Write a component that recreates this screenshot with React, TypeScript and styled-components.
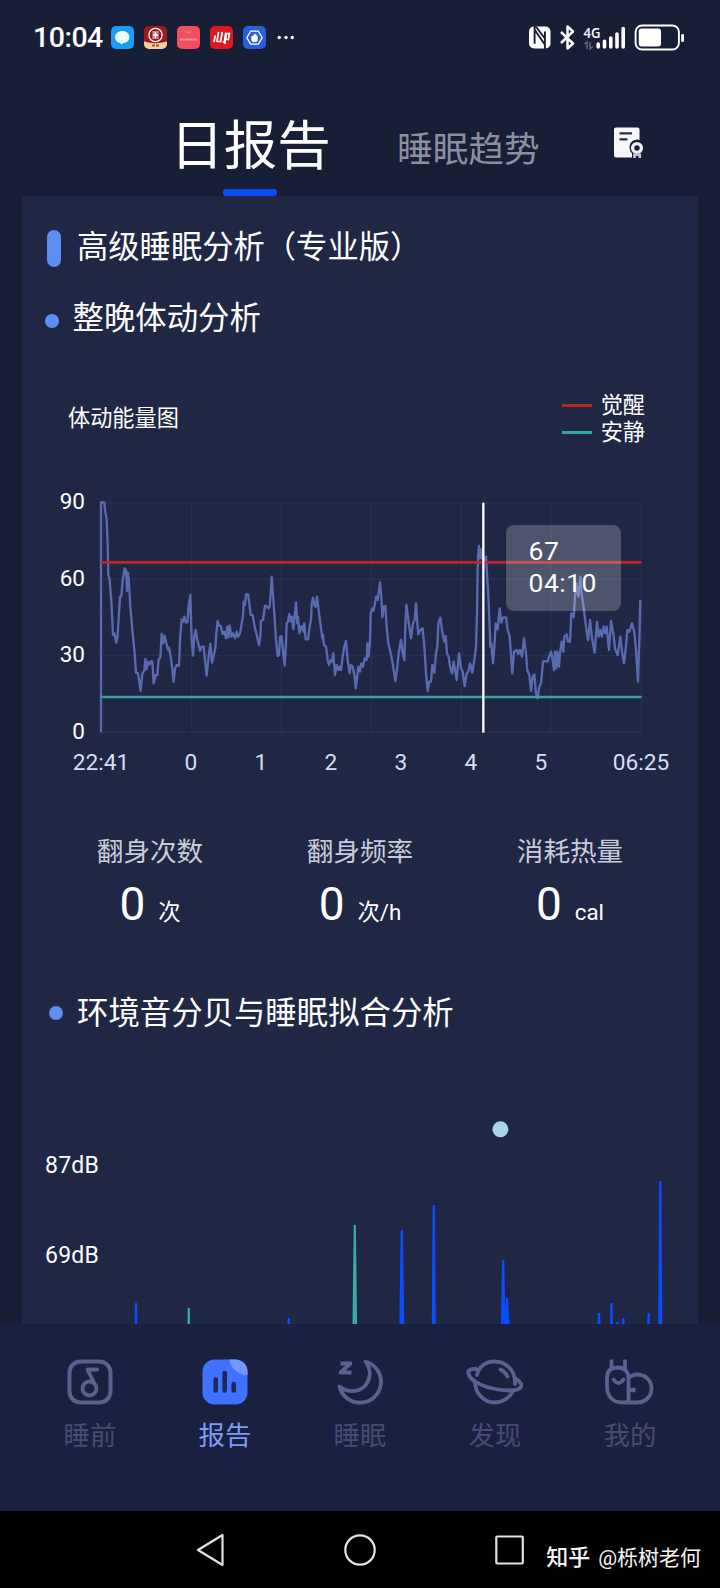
import React from 'react';
import styled, { createGlobalStyle } from 'styled-components';

const GlobalStyle = createGlobalStyle`
  * { box-sizing: border-box; }
  body { margin: 0; background: #181e36; }
  svg { display: block; flex: none; }
`;

const Screen = styled.div`
  width: 720px;
  height: 1588px;
  display: flex;
  flex-direction: column;
  overflow: hidden;
  background: #181e36;
  color: #fff;
  font-family: Roboto, 'Noto Sans CJK SC', sans-serif;
`;

const StatusBar = styled.header`
  height: 75px;
  flex: none;
  display: flex;
  align-items: center;
  justify-content: space-between;
  padding: 0 36px 0 33px;
`;

const StatusGroup = styled.div<{ $gap: number }>`
  display: flex;
  align-items: center;
  gap: ${(p) => p.$gap}px;
`;

const Clock = styled.span`
  width: 68px;
  font-size: 28.5px;
  line-height: 30px;
  font-weight: 500;
  letter-spacing: -0.5px;
  white-space: nowrap;
`;

const Tabs = styled.nav`
  height: 121px;
  flex: none;
  display: flex;
  align-items: flex-start;
  padding-left: 170px;
`;

const ActiveTab = styled.div`
  width: 161px;
  height: 121px;
  display: flex;
  flex-direction: column;
  align-items: center;
  justify-content: space-between;
  font-size: 53.5px;
  line-height: 60px;
  padding-top: 42px;
  white-space: nowrap;

  &::after {
    content: '';
    width: 54px;
    height: 7px;
    margin-right: 2px;
    border-radius: 3px;
    background: #0a4cf2;
  }
`;

const InactiveTab = styled.div`
  margin: 55px 0 0 66px;
  width: 144px;
  font-size: 35.7px;
  line-height: 40px;
  color: #8c8f9f;
  white-space: nowrap;
`;

const ReportButton = styled.button`
  margin: 52px 0 0 73px;
  padding: 0;
  border: 0;
  background: none;
`;

const Panel = styled.main`
  height: 1128px;
  flex: none;
  margin: 0 22px;
  background: #1f2745;
  overflow: hidden;
`;

const SectionTitle = styled.h1`
  margin: 30px 0 0 25px;
  height: 44px;
  display: flex;
  align-items: center;
  gap: 16px;
  font-size: 31.3px;
  line-height: 40px;
  font-weight: 400;

  &::before {
    content: '';
    width: 14px;
    height: 37px;
    border-radius: 7px;
    background: #5f8ef2;
  }
`;

const SubTitle = styled.h2<{ $top: number; $left: number; $drop: number }>`
  margin: ${(p) => p.$top}px 0 0 ${(p) => p.$left}px;
  height: 44px;
  display: flex;
  align-items: center;
  gap: 14px;
  font-size: 31.4px;
  line-height: 40px;
  font-weight: 400;

  &::before {
    content: '';
    width: 14px;
    height: 14px;
    margin-top: ${(p) => p.$drop}px;
    border-radius: 50%;
    background: #5f8ef2;
  }
`;

const ChartHeader = styled.div`
  margin: 47px 53px 0 46px;
  height: 60px;
  display: flex;
  align-items: center;
  justify-content: space-between;
  font-size: 22.2px;
  line-height: 27px;
`;

const Legend = styled.div`
  display: flex;
  flex-direction: column;
  padding-top: 2px;
`;

const LegendItem = styled.div<{ $color: string }>`
  display: flex;
  align-items: center;
  gap: 9px;

  &::before {
    content: '';
    width: 30px;
    height: 3px;
    background: ${(p) => p.$color};
  }
`;

const ChartBody = styled.div`
  position: relative;
  margin-top: 50px;
  height: 238px;
  display: flex;
`;

const YAxis = styled.div`
  width: 75px;
  height: 254px;
  margin-top: -9px;
  padding-right: 12px;
  display: flex;
  flex-direction: column;
  justify-content: space-between;
  align-items: flex-end;
  font-size: 22.5px;
  line-height: 24px;
`;

const Tooltip = styled.div`
  position: absolute;
  left: 483.5px;
  top: 27px;
  width: 115px;
  height: 86px;
  padding: 10px 0 0 23px;
  border-radius: 8px;
  background: rgba(255, 255, 255, 0.21);
  font-size: 26.5px;
  line-height: 32px;
  letter-spacing: 0.5px;
`;

const XAxis = styled.div`
  margin: 14px 0 0 24px;
  width: 660px;
  display: grid;
  grid-template-columns: 110px repeat(6, 70px) 130px;
  justify-items: center;
  font-size: 22.7px;
  line-height: 26px;
  color: #d5ddf5;
`;

const Stats = styled.div`
  margin: 59px 23px 0;
  display: grid;
  grid-template-columns: repeat(3, 210px);
  justify-items: center;
`;

const Stat = styled.div`
  display: flex;
  flex-direction: column;
  align-items: center;
`;

const StatLabel = styled.span`
  font-size: 26.6px;
  line-height: 34px;
  color: #c8cbd9;
`;

const StatValue = styled.div`
  margin-top: 7px;
  height: 56px;
  display: flex;
  align-items: baseline;
  gap: 13px;
  font-size: 46px;
  line-height: 56px;
`;

const Unit = styled.span`
  font-size: 22.3px;
  line-height: 24px;
`;

const NoiseChart = styled.div`
  margin-top: 74px;
  height: 214px;
  display: flex;
`;

const NoiseAxis = styled.div`
  width: 98px;
  padding: 41px 0 0 23px;
  display: flex;
  flex-direction: column;
  gap: 60px;
  font-size: 23px;
  line-height: 30px;
  letter-spacing: 0.2px;
`;

const BottomBar = styled.nav`
  height: 187px;
  flex: none;
  padding: 35px 22.5px 0;
  display: grid;
  grid-template-columns: repeat(5, 135px);
  justify-items: center;
  align-items: start;
  background: #1a2040;
`;

const BottomItem = styled.div<{ $active?: boolean }>`
  display: flex;
  flex-direction: column;
  align-items: center;
  gap: 14px;
  font-size: 26.4px;
  line-height: 34px;
  color: ${(p) => (p.$active ? '#7c9cf8' : '#454b73')};
`;

const SystemNav = styled.footer`
  position: relative;
  height: 77px;
  flex: none;
  display: flex;
  align-items: center;
  gap: 118px;
  padding-left: 194px;
  background: #000;
`;

const Watermark = styled.div`
  position: absolute;
  right: 19px;
  top: 32px;
  display: flex;
  gap: 8px;
  font-size: 21px;
  line-height: 30px;
  color: #f4f4f4;
  white-space: nowrap;
`;

const Brand = styled.b`
  font-size: 22px;
  font-weight: 500;
`;

const AppIcons = () => (
  <>
    <svg width="23" height="23" viewBox="0 0 23 23">
      <rect width="23" height="23" rx="5" fill="#199df5" />
      <path d="M11.4 5c4.1 0 7 2.6 7 6.1 0 3.6-3 6.1-6.7 6.1l-.9 1.5-1.8-1.8C6 16.200 4 14 4 11.200 4 7.700 7.200 5 11.400 5Z" fill="#e9fbff" />
    </svg>
    <svg width="23" height="23" viewBox="0 0 23 23">
      <rect width="23" height="23" rx="5" fill="#9d1820" />
      <path d="M0 15.500Q11.500 19 23 15.500V18a5 5 0 0 1-5 5H5a5 5 0 0 1-5-5Z" fill="#f4cfa0" />
      <circle cx="11.500" cy="9" r="6.600" fill="none" stroke="#fff" strokeWidth="1.300" />
      <path d="M8.300 6h6.400M8.300 12h6.400M11.500 6v6M8.500 8.200h2v1.700h-2M14.500 8.200h-2v1.700h2" fill="none" stroke="#fff" strokeWidth="1.200" />
      <path d="M8 19.500h3M12 19.500h3" stroke="#b3503b" strokeWidth="2" />
    </svg>
    <svg width="23" height="23" viewBox="0 0 23 23">
      <rect width="23" height="23" rx="5" fill="#f24e5f" />
      <path d="M8.500 5q3 3.500 6 0" fill="none" stroke="#f98c8f" />
      <path d="M3 13.500h17" stroke="#f9a3a2" strokeWidth="2" strokeDasharray="2 .6" />
    </svg>
    <svg width="23" height="23" viewBox="0 0 23 23">
      <rect width="23" height="23" rx="5" fill="#e2171f" />
      <path d="M5.300 9.500l-1.300 6.500M8.600 6l-1.700 10M12.300 6l-1.700 9.500H7M15.800 6.500l-1.400 9M15.600 7.500h3.800l-1.100 6h-2M12.500 16l3-.5M16.500 8l-1.900 10" fill="none" stroke="#fff" strokeWidth="1.700" />
    </svg>
    <svg width="23" height="23" viewBox="0 0 23 23">
      <rect width="23" height="23" rx="5" fill="#285fdc" />
      <path d="M7.700 5.200h7.600l3.900 6.500-3.900 6.500H7.700l-3.900-6.500Z" fill="none" stroke="#fff" strokeWidth="1.300" />
      <path d="M8.300 10v4q0 2 3.200 2t3.200-2v-4h-1V8.500h-1V7.800h-1.200v.8h-1.200V10Z" fill="#fff" />
    </svg>
  </>
);

const MoreDots = () => (
  <svg width="18" height="6" viewBox="0 0 18 6" fill="#fff">
    <circle cx="3.200" cy="2.500" r="1.700" />
    <circle cx="10" cy="2.500" r="1.700" />
    <circle cx="16.300" cy="2.500" r="1.700" />
  </svg>
);

const SystemIcons = () => (
  <svg width="156" height="28" viewBox="528 23.500 156 28">
    <rect x="529" y="26" width="21.500" height="22" rx="5" fill="#fff" />
    <path d="M534.600 25v18.200M534.800 29.500l10.200 14.800M544.900 49V31M536 26.300l9.500 12.500" fill="none" stroke="#181e36" strokeWidth="1.900" />
    <path d="M561 31.500l12 11.500-5.500 5V26l5.500 5-12 11.500" fill="none" stroke="#fff" strokeWidth="2.500" strokeLinejoin="round" />
    <text x="583.500" y="37" fill="#fff" fontSize="14" fontWeight="600" fontFamily="'Open Sans', sans-serif" textLength="17" lengthAdjust="spacingAndGlyphs">4G</text>
    <path d="M584.500 43.500l2.500-2v7M590 41.500v7l2.800-2.500" fill="none" stroke="#666a82" strokeWidth="1.500" />
    <path d="M598.200 43.500v3M604.500 40.700v5.800M610.800 37.500v9M617 33.500v13M623.200 28v18.500" stroke="#fff" strokeWidth="3.600" strokeLinecap="round" />
    <rect x="635.600" y="25" width="43.300" height="24" rx="6.500" fill="none" stroke="#fff" strokeWidth="1.900" />
    <rect x="638.700" y="28" width="22.300" height="18" rx="3" fill="#fff" />
    <rect x="681.200" y="33.500" width="2.800" height="8" rx="1.200" fill="#fff" />
  </svg>
);

const ReportIcon = () => (
  <svg width="30" height="33" viewBox="0 0 30 33">
    <path d="M2 .500H23.500a2 2 0 0 1 2 2V13a7.500 7.500 0 0 0-10 7.500q0 4 2.500 6V30.500H2a2 2 0 0 1-2-2V2.500a2 2 0 0 1 2-2Z" fill="#f7f7fa" />
    <path d="M5.500 6.300h12.500M5.500 12.300h8" stroke="#2b3049" strokeWidth="2.200" />
    <circle cx="23" cy="21" r="4.400" fill="none" stroke="#eceef3" strokeWidth="3.400" />
    <path d="M20.500 26.500v4.500M25.800 26.500v4.500" stroke="#c9ccd6" strokeWidth="2.600" />
    <path d="M19.500 28h7.500" stroke="#c9ccd6" strokeWidth="1.800" />
  </svg>
);

/* Body-movement curve, in thirds of a pixel. */
const MOVEMENT = `183,757 183,67 193,67 195,90 200,118 203,200 205,285 209,298 215,380 219,465 223,460 229,488 233,465
237,400 240,350 244,350 248,300 254,265 258,272 261,333 264,278 267,310 271,380 277,450 284,520 288,578 294,580
302,633 307,580 313,572 316,537 320,568 324,545 329,553 334,543 337,545 341,610 347,585 352,585 356,538 361,533
365,461 369,490 374,467 379,490 384,510 387,502 392,530 396,560 401,606 405,565 410,555 417,557 420,480 425,418
429,425 433,410 438,428 443,425 446,375 451,345 455,480 459,527 463,470 467,450 472,480 476,495 480,512 485,500
491,500 496,550 500,587 505,535 511,492 516,548 521,525 526,505 529,460 533,423 537,435 543,440 548,462 553,455
558,475 562,440 565,472 569,437 574,470 579,460 585,475 590,455 594,470 600,460 605,430 609,410 611,365 615,375
618,343 624,343 628,370 632,405 638,405 644,440 650,465 657,495 661,470 663,422 669,420 675,378 680,378 685,385
689,380 692,340 695,290 699,345 703,400 708,480 713,528 717,525 720,470 724,468 728,500 734,557 738,490 740,430
744,425 748,402 752,425 756,410 760,447 764,410 768,368 772,430 774,410 778,460 782,440 786,440 790,455 793,430
797,478 804,478 809,440 813,420 815,375 819,353 823,375 827,380 831,350 836,390 841,430 847,475 849,465 852,495
858,500 863,540 867,555 872,540 876,545 880,520 885,585 890,555 895,570 899,560 903,570 908,530 913,500 918,483
923,540 929,580 932,555 938,560 941,575 944,590 947,625 951,595 955,560 960,575 964,550 969,560 974,535 980,540
982,490 986,530 990,480 992,400 996,385 1000,393 1004,375 1008,350 1013,360 1020,307 1024,350 1027,412 1031,380
1036,378 1040,440 1045,490 1052,520 1058,550 1066,603 1071,570 1076,520 1083,480 1088,520 1093,540 1096,440
1099,375 1105,420 1113,475 1119,430 1124,420 1128,370 1132,430 1135,463 1141,450 1148,445 1153,500 1158,580
1163,633 1168,605 1173,605 1177,555 1183,578 1188,520 1192,500 1195,430 1201,413 1206,450 1212,485 1217,468
1221,520 1226,530 1230,560 1236,580 1241,545 1245,570 1250,600 1257,520 1263,565 1268,575 1274,618 1280,580
1285,575 1290,550 1297,578 1303,540 1308,500 1311,400 1313,270 1314,230 1317,198 1320,235 1323,208 1327,235
1332,245 1338,230 1341,280 1345,350 1349,440 1351,500 1354,490 1359,550 1363,500 1367,430 1373,448 1379,385
1384,428 1389,412 1398,412 1403,450 1409,470 1414,540 1417,580 1422,515 1430,510 1435,522 1440,510 1446,530
1452,475 1458,520 1462,570 1468,585 1473,633 1478,590 1483,583 1488,640 1493,655 1498,620 1503,610 1509,545
1516,543 1523,545 1527,530 1533,515 1538,540 1542,570 1545,515 1549,565 1552,515 1557,560 1560,520 1565,485
1570,515 1573,470 1580,463 1584,485 1590,485 1594,400 1601,412 1605,350 1609,310 1615,350 1621,290 1624,340
1628,360 1633,400 1638,440 1644,480 1650,420 1656,475 1664,518 1671,425 1676,470 1681,450 1686,470 1691,440
1696,460 1700,440 1707,510 1713,423 1720,460 1725,505 1733,525 1741,470 1746,515 1752,550 1758,500 1762,450
1768,455 1776,430 1783,455 1788,510 1794,605 1798,480 1801,360`;

const MovementPlot = () => (
  <svg width="552" height="238" viewBox="171 54 1656 714" fill="none">
    <g stroke="#27345a" strokeWidth="3">
      {[69, 298, 527, 757].map((y) => (
        <path key={y} d={`M183 ${y}H1805`} />
      ))}
      {[455, 724, 994, 1264, 1533, 1804].map((x) => (
        <path key={x} d={`M${x} 69V757`} />
      ))}
    </g>
    <polyline points={MOVEMENT} stroke="#596bae" strokeWidth="7" strokeLinejoin="round" />
    <path d="M183 247H1805" stroke="#c02428" strokeWidth="8" />
    <path d="M183 651H1805" stroke="#35a4a0" strokeWidth="8" />
    <path d="M1330 68V758" stroke="#fff" strokeWidth="7" />
  </svg>
);

const BLUE = '#0a4dff';
const TEAL = '#36aaa3';

/* x centre, peak height above the chart's lower edge, base width, colour */
const PEAKS: [number, number, number, string][] = [
  [136, 21, 2.6, BLUE],
  [188.8, 16, 2.6, TEAL],
  [288.8, 6, 3, BLUE],
  [354.8, 99, 4.6, TEAL],
  [401.8, 94, 5, BLUE],
  [433.8, 119, 4, BLUE],
  [503.2, 64, 4.6, BLUE],
  [507, 26, 5, BLUE],
  [599, 11, 3, BLUE],
  [611.5, 21, 3, BLUE],
  [617.500, 2, 3, BLUE],
  [623.300, 6, 3, BLUE],
  [648.600, 11, 3, BLUE],
  [660.300, 143, 4, BLUE],
];

const NoisePlot = () => (
  <svg width="578" height="214" viewBox="120 0 578 214">
    <circle cx="500.400" cy="19.300" r="8" fill="#a9d6e3" />
    {PEAKS.map(([x, h, w, color]) => (
      <path
        key={x}
        d={`M${x - w / 2} 214L${x - 1.1} ${214 - h}H${x + 1.1}L${x + w / 2} 214Z`}
        fill={color}
      />
    ))}
  </svg>
);

const LINE = '#59618f';

const MusicIcon = () => (
  <svg width="58" height="46" viewBox="0 0 58 46" fill="none" stroke={LINE} strokeWidth="4">
    <rect x="8.500" y="2.500" width="41" height="41" rx="11" />
    <circle cx="28.500" cy="29.500" r="7" strokeWidth="3.800" />
    <path d="M33.500 25L26.500 10.500H36" strokeWidth="3.800" strokeLinecap="round" strokeLinejoin="round" />
  </svg>
);

const ChartIcon = () => (
  <svg width="58" height="46" viewBox="0 0 58 46">
    <rect x="6.500" y="0.500" width="45" height="45" rx="12" fill="#3e72ff" />
    <path d="M33.500.500H39.500A12 12 0 0 1 51.500 12.500V16A17.500 17.500 0 0 1 33.500.500Z" fill="#7196ff" />
    <path d="M19.700 20.500V31.500M28.700 14V31.500M37.700 25V31.500" stroke="#1c2855" strokeWidth="4.600" strokeLinecap="round" />
  </svg>
);

const MoonIcon = () => (
  <svg width="58" height="46" viewBox="0 0 58 46" fill="none" stroke={LINE} strokeWidth="3.800" strokeLinejoin="round">
    <path d="M34.500 2.500A21 21 0 1 1 8.500 27.500C19 35.500 31 32 35.800 24.500C40.500 17 39 9 34.500 2.500Z" />
    <path d="M9.500 4.500H19.500L9.500 13.500H20.500" />
  </svg>
);

const PlanetIcon = () => (
  <svg width="58" height="46" viewBox="0 0 58 46" fill="none" stroke={LINE} strokeWidth="3.800" strokeLinecap="round">
    <path d="M11 16C13 7.500 20 2.500 28.500 2.500C40 2.500 49 11.500 49 23V25M9 22.500C9 34 17.500 43.500 28.500 43.500C37 43.500 44 38.500 47 32" />
    <path d="M10 10C4.500 9.500 1.500 11.500 2.500 14.500C4 21.500 15 27 27 29.500C39 32 51 32.500 54.500 28.500C56.500 26 54.500 23 50.500 20" />
    <path d="M34.500 10.500Q39.500 13 41.500 17.500" />
  </svg>
);

const SnailIcon = () => (
  <svg width="58" height="46" viewBox="0 0 58 46" fill="none" stroke={LINE} strokeWidth="3.800">
    <path d="M27.500 43V19.500C27.500 12 23 8.500 16.500 8.500S6 12 6 19.500V27C6 37 11.500 43.500 21 43.500H35.500C44.500 43.500 50.500 37.500 50.500 29.500S44.500 15.500 36 15.500Q31.500 15.500 28.500 18.500" />
    <path d="M10.500 .500V10.500M24 .500V10.500" />
    <path d="M12.500 20.500Q17.500 27.500 22.500 20.500" strokeLinecap="round" />
    <path d="M28.500 31H34.500" strokeWidth="4.500" />
  </svg>
);

const ITEMS = [
  { label: '睡前', Icon: MusicIcon },
  { label: '报告', Icon: ChartIcon, active: true },
  { label: '睡眠', Icon: MoonIcon },
  { label: '发现', Icon: PlanetIcon },
  { label: '我的', Icon: SnailIcon },
];

const STATS = [
  { label: '翻身次数', unit: '次' },
  { label: '翻身频率', unit: '次/h' },
  { label: '消耗热量', unit: 'cal' },
];

export default function App() {
  return (
    <Screen>
      <GlobalStyle />
      <StatusBar>
        <StatusGroup $gap={10}>
          <Clock>10:04</Clock>
          <AppIcons />
          <MoreDots />
        </StatusGroup>
        <SystemIcons />
      </StatusBar>

      <Tabs>
        <ActiveTab>日报告</ActiveTab>
        <InactiveTab>睡眠趋势</InactiveTab>
        <ReportButton aria-label="报告">
          <ReportIcon />
        </ReportButton>
      </Tabs>

      <Panel>
        <SectionTitle>高级睡眠分析（专业版）</SectionTitle>
        <SubTitle $top={27} $left={22.5} $drop={4}>整晚体动分析</SubTitle>
        <ChartHeader>
          <span>体动能量图</span>
          <Legend>
            <LegendItem $color="#ba2421">觉醒</LegendItem>
            <LegendItem $color="#30a99d">安静</LegendItem>
          </Legend>
        </ChartHeader>
        <ChartBody>
          <YAxis>
            {[90, 60, 30, 0].map((v) => (
              <span key={v}>{v}</span>
            ))}
          </YAxis>
          <MovementPlot />
          <Tooltip>
            <div>67</div>
            <div>04:10</div>
          </Tooltip>
        </ChartBody>
        <XAxis>
          {['22:41', '0', '1', '2', '3', '4', '5', '06:25'].map((t) => (
            <span key={t}>{t}</span>
          ))}
        </XAxis>
        <Stats>
          {STATS.map(({ label, unit }) => (
            <Stat key={label}>
              <StatLabel>{label}</StatLabel>
              <StatValue>
                0<Unit>{unit}</Unit>
              </StatValue>
            </Stat>
          ))}
        </Stats>
        <SubTitle $top={60} $left={27} $drop={-2}>环境音分贝与睡眠拟合分析</SubTitle>
        <NoiseChart>
          <NoiseAxis>
            <span>87dB</span>
            <span>69dB</span>
          </NoiseAxis>
          <NoisePlot />
        </NoiseChart>
      </Panel>

      <BottomBar>
        {ITEMS.map(({ label, Icon, active }) => (
          <BottomItem key={label} $active={active}>
            <Icon />
            <span>{label}</span>
          </BottomItem>
        ))}
      </BottomBar>

      <SystemNav>
        <svg width="32" height="34" viewBox="0 0 32 34" fill="none" stroke="#e2e2e2" strokeWidth="2.200" strokeLinejoin="round">
          <path d="M28.500 2V32L4 17Z" />
        </svg>
        <svg width="32" height="34" viewBox="0 0 32 34" fill="none" stroke="#e2e2e2" strokeWidth="2.200">
          <circle cx="16" cy="17" r="14.700" />
        </svg>
        <svg width="32" height="34" viewBox="0 0 32 34" fill="none" stroke="#e2e2e2" strokeWidth="2.200">
          <rect x="2.300" y="3.500" width="26.500" height="27" rx="1" />
        </svg>
        <Watermark>
          <Brand>知乎</Brand>
          <span>@栎树老何</span>
        </Watermark>
      </SystemNav>
    </Screen>
  );
}
